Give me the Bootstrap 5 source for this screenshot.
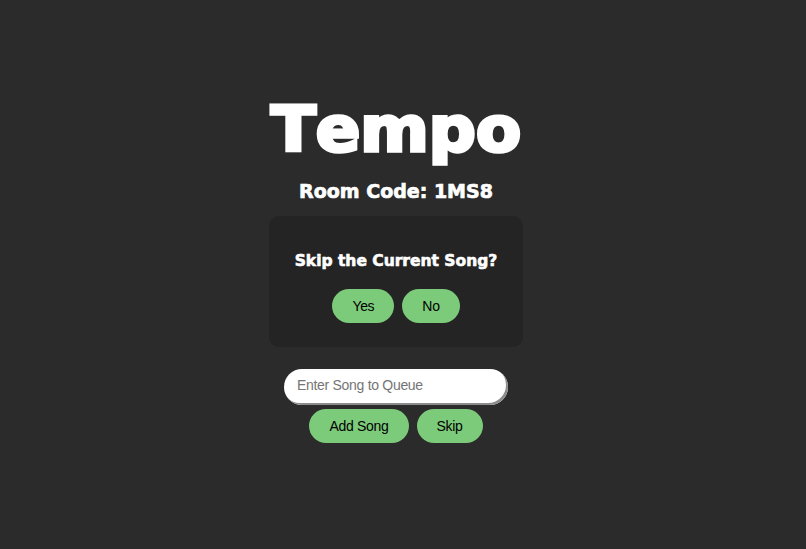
<!doctype html>
<html lang="en"><head><meta charset="utf-8"><title>Tempo</title>
<link href="https://cdn.jsdelivr.net/npm/bootstrap@5.3.0/dist/css/bootstrap.min.css" rel="stylesheet">
<style>
html,body{height:100%}
body{background:#2b2b2b;color:#fff;font-family:"Liberation Sans",Arial,sans-serif;overflow:hidden;padding-right:14px}
.stage{width:254px;margin:0 auto;padding-top:86px}
.logo-title{font-family:"DejaVu Sans",sans-serif;font-weight:700;font-size:62px;line-height:88px;margin:0;font-kerning:none;-webkit-text-stroke:3.5px #fff;white-space:nowrap;text-align:center;transform:scaleX(1.06)}
.room-code{font-family:"DejaVu Sans",sans-serif;font-weight:700;font-size:19px;line-height:24px;margin:0 0 13px;text-align:center;white-space:nowrap;padding-top:5px;-webkit-text-stroke:.7px #fff}
.vote-box{background:#242424;border-radius:10px;height:131px;padding-top:35px}
.vote-title{font-family:"DejaVu Sans",sans-serif;font-weight:700;font-size:15.5px;line-height:20px;margin:0 0 18px;text-align:center;white-space:nowrap;-webkit-text-stroke:.6px #fff}
.pill{font-family:"Liberation Sans",Arial,sans-serif;background:#7ccb7a;color:#000;border:0;border-radius:17px;height:34px;font-size:14px;letter-spacing:-.3px;padding:0 20px;line-height:34px}
.pill:hover{background:#7ccb7a;color:#000}
.song-input{font-family:"Liberation Sans",Arial,sans-serif;display:block;width:224px;height:36px;margin:22px auto 4px;border-radius:18px;border:0;box-shadow:inset -2px -2px 0 #8c8c8c;padding:0 13px 4px;font-size:14px;letter-spacing:-.3px;background:#fff}
.song-input::placeholder{color:#757575}
</style></head><body>
<main class="stage">
<h1 class="logo-title">Tempo</h1>
<h2 class="room-code">Room Code: 1MS8</h2>
<section class="vote-box">
<h3 class="vote-title">Skip the Current Song?</h3>
<div class="d-flex justify-content-center gap-2"><button class="btn pill">Yes</button><button class="btn pill">No</button></div>
</section>
<input class="song-input" placeholder="Enter Song to Queue">
<div class="d-flex justify-content-center gap-2"><button class="btn pill">Add Song</button><button class="btn pill">Skip</button></div>
</main>
<script src="https://cdn.jsdelivr.net/npm/bootstrap@5.3.0/dist/js/bootstrap.bundle.min.js"></script>
</body></html>
